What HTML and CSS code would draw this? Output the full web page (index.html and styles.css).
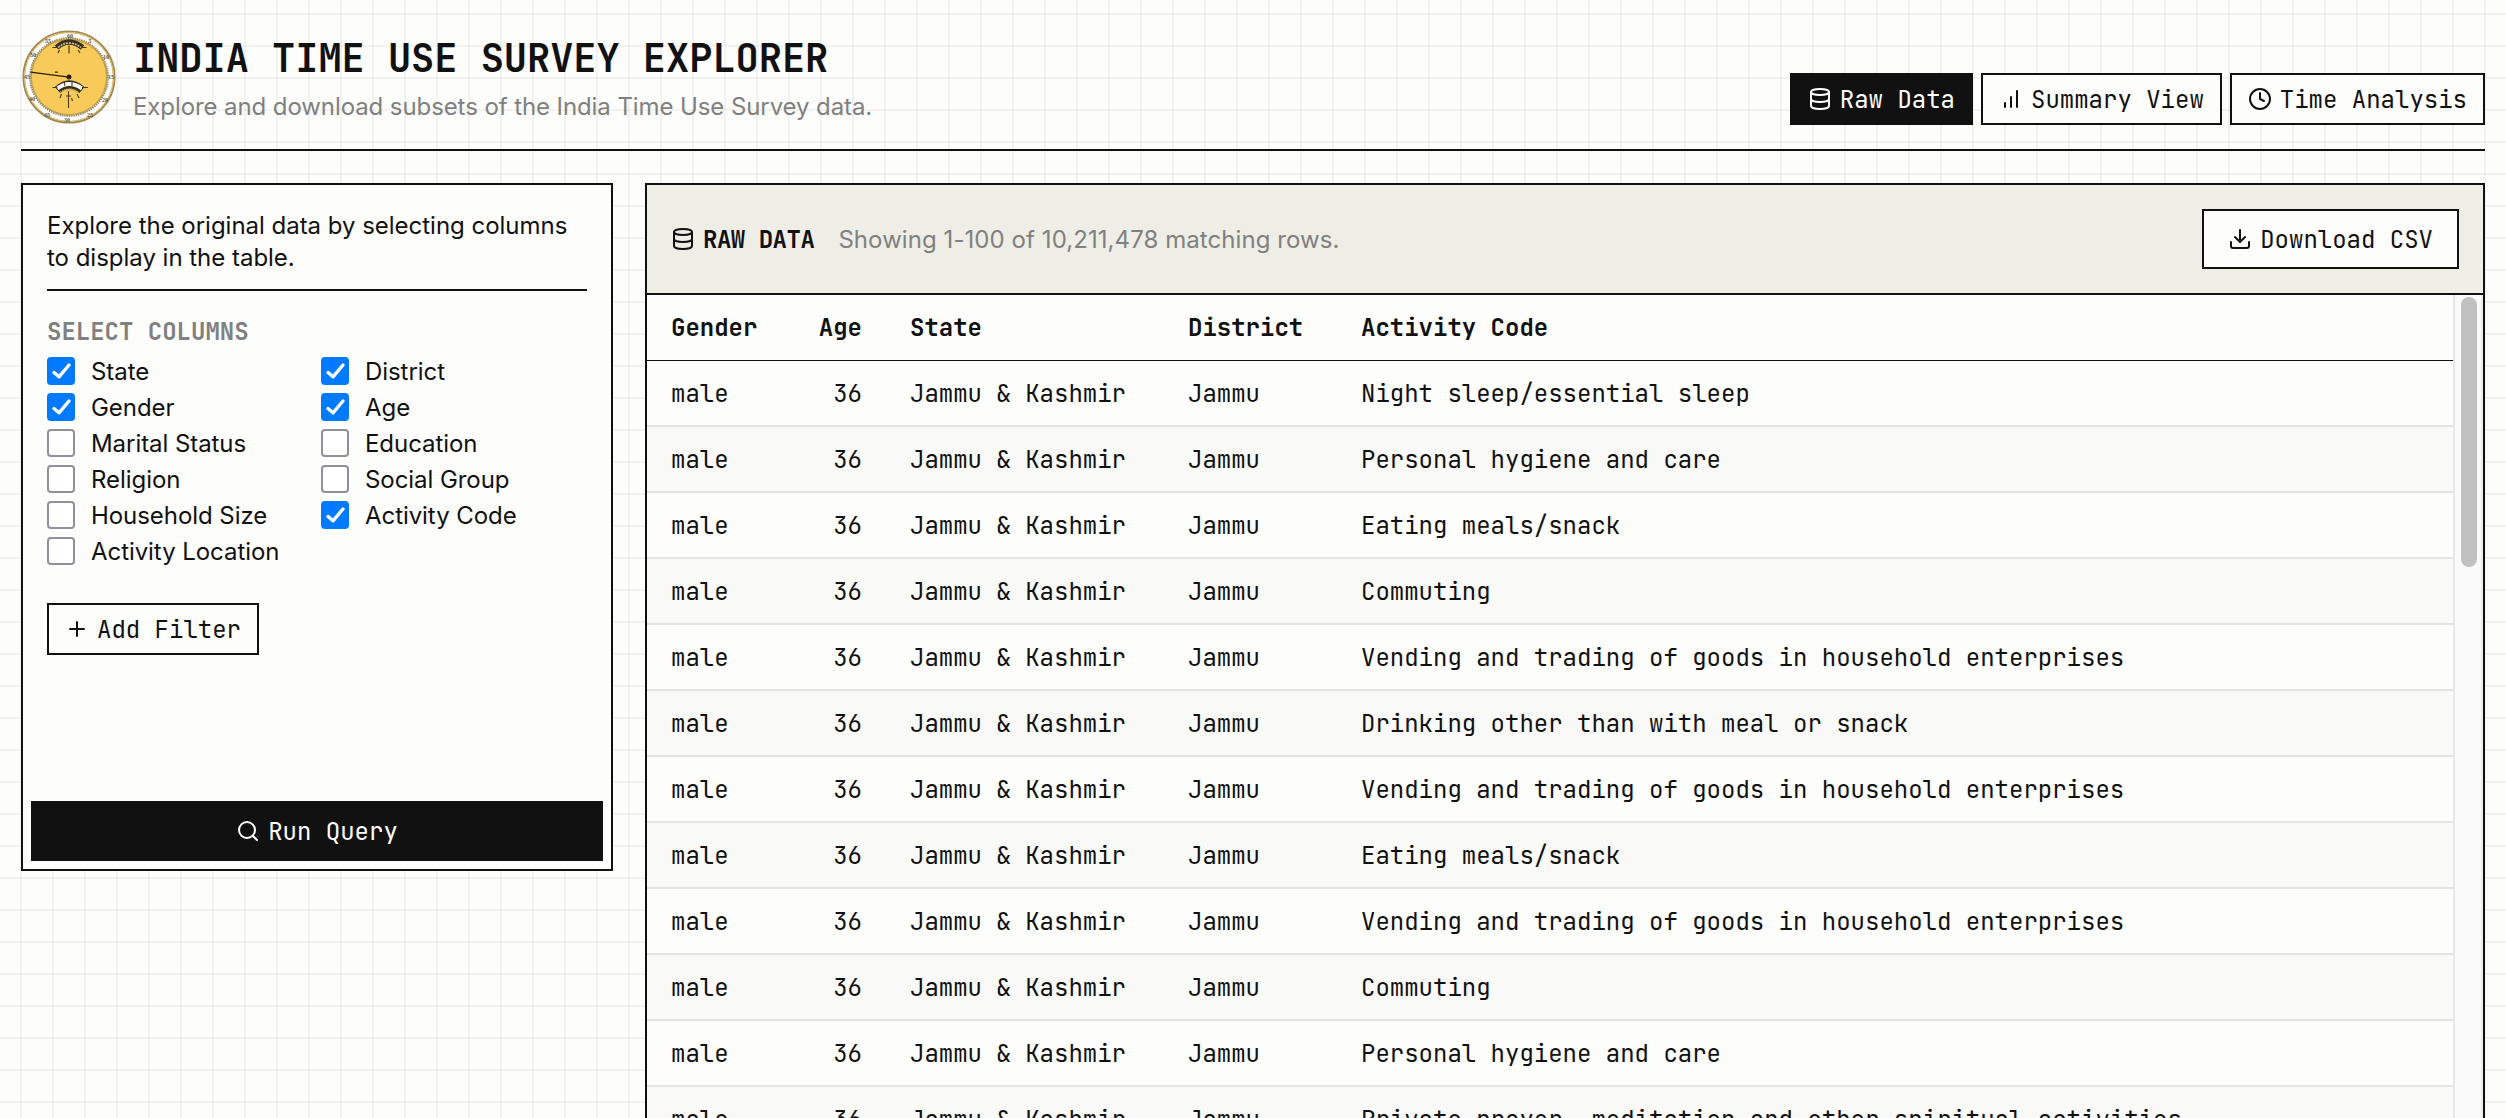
FILE: index.html
```html
<!DOCTYPE html>
<html lang="en">
<head>
<meta charset="utf-8">
<title>India Time Use Survey Explorer</title>
<link rel="stylesheet" href="styles.css">
</head>
<body>
<svg class="defs" width="0" height="0">
  <symbol id="database" viewBox="0 0 24 24"><ellipse cx="12" cy="5" rx="9" ry="3"/><path d="M3 5v14a9 3 0 0 0 18 0V5"/><path d="M3 12a9 3 0 0 0 18 0"/></symbol>
  <symbol id="bars" viewBox="0 0 24 24"><path d="M6 20v-4M12 20V10M18 20V4"/></symbol>
  <symbol id="clock" viewBox="0 0 24 24"><circle cx="12" cy="12" r="10"/><path d="M12 6v6l4 2"/></symbol>
  <symbol id="download" viewBox="0 0 24 24"><path d="M21 15v4a2 2 0 0 1-2 2H5a2 2 0 0 1-2-2v-4M7 10l5 5 5-5M12 15V3"/></symbol>
  <symbol id="plus" viewBox="0 0 24 24"><path d="M5 12h14M12 5v14"/></symbol>
  <symbol id="search" viewBox="0 0 24 24"><circle cx="11" cy="11" r="8"/><path d="m21 21-4.3-4.3"/></symbol>
  <symbol id="check" viewBox="0 0 28 28"><path d="M7 15.500 12 19.800 22 8"/></symbol>
</svg>
<header class="header">
  <svg class="logo" viewBox="0 0 96 96">
    <circle cx="48" cy="48" r="46" fill="#fff"/>
    <circle cx="48" cy="48" r="45.6" fill="none" stroke="#a08a52" stroke-width="1.800"/>
    <circle cx="48" cy="48" r="44.4" fill="none" stroke="#d9ae4c" stroke-width="1"/>
    <circle cx="48" cy="48" r="38.9" fill="#f8ca5a" stroke="#8d8874" stroke-width="2" stroke-dasharray="1.4 .9"/>
    <circle cx="48" cy="48" r="37.6" fill="#f8ca5a" stroke="#917a3f" stroke-width=".6"/>
    <g class="numerals">
      <text x="49" y="8.5">60</text><text x="69" y="14">5</text><text x="85" y="30">10</text><text x="90" y="50">15</text><text x="84" y="73">20</text><text x="69" y="88">25</text><text x="46" y="93">30</text><text x="26" y="88">35</text><text x="11" y="72">40</text><text x="6" y="50">45</text><text x="12" y="28">50</text><text x="27" y="14">55</text>
    </g>
    <path d="M35.500 18.500Q48 7.500 61.500 18.500" fill="none" stroke="#39301c" stroke-width="5.500"/>
    <path d="M37 18.500Q48 9.500 60 18.500" fill="none" stroke="#d6c79f" stroke-width="1.600" stroke-dasharray="2 1"/>
    <path d="M31.500 18.500h5M60.500 18.500h5M38.500 21l-1.500 3M48 16.500v8M57 21l2 3" fill="none" stroke="#4b3b1c" stroke-width="1.200"/>
    <path d="M36.500 61Q48 50 61 61" fill="none" stroke="#39301c" stroke-width="8"/>
    <path d="M36.500 59.500Q48 50.500 61 59.500" fill="none" stroke="#fff" stroke-width="4"/>
    <path d="M39.500 63.500Q48 57 58 63.500" fill="none" stroke="#b79f62" stroke-width="1.800" stroke-dasharray="1.200 1"/>
    <path d="M43 52.500l1 4.500M51 52v5M31.500 58.500h5M61 58.500h6M40.500 65l-1.500 4M56 65l2 4M47.500 62v17M45 67h5M50.500 69l1 3" fill="none" stroke="#4b3b1c" stroke-width="1.100"/>
    <path d="M9.500 43.200 48 48.200" stroke="#29200f" stroke-width="1.300"/>
    <path d="M34 43.200h3" stroke="#5e4a20" stroke-width="1.500"/>
    <circle cx="48" cy="48" r="2.500" fill="#29200f"/>
  </svg>
  <div class="heading">
    <h1>INDIA TIME USE SURVEY EXPLORER</h1>
    <p>Explore and download subsets of the India Time Use Survey data.</p>
  </div>
  <nav class="tabs">
    <button class="btn active"><svg class="icon"><use href="#database"/></svg>Raw Data</button>
    <button class="btn"><svg class="icon"><use href="#bars"/></svg>Summary View</button>
    <button class="btn"><svg class="icon"><use href="#clock"/></svg>Time Analysis</button>
  </nav>
</header>
<main class="layout">
  <aside class="sidebar">
    <div class="controls">
      <p class="intro">Explore the original data by selecting columns to display in the table.</p>
      <h2 class="label">SELECT COLUMNS</h2>
      <div class="columns">
        <div class="option"><span class="box on"><svg><use href="#check"/></svg></span>State</div>
        <div class="option"><span class="box on"><svg><use href="#check"/></svg></span>District</div>
        <div class="option"><span class="box on"><svg><use href="#check"/></svg></span>Gender</div>
        <div class="option"><span class="box on"><svg><use href="#check"/></svg></span>Age</div>
        <div class="option"><span class="box"></span>Marital Status</div>
        <div class="option"><span class="box"></span>Education</div>
        <div class="option"><span class="box"></span>Religion</div>
        <div class="option"><span class="box"></span>Social Group</div>
        <div class="option"><span class="box"></span>Household Size</div>
        <div class="option"><span class="box on"><svg><use href="#check"/></svg></span>Activity Code</div>
        <div class="option"><span class="box"></span>Activity Location</div>
      </div>
      <button class="btn"><svg class="icon"><use href="#plus"/></svg>Add Filter</button>
    </div>
    <button class="btn active run"><svg class="icon"><use href="#search"/></svg>Run Query</button>
  </aside>
  <section class="results">
    <div class="results-head">
      <h2 class="title"><svg class="icon"><use href="#database"/></svg>RAW DATA</h2>
      <p class="count">Showing 1-100 of 10,211,478 matching rows.</p>
      <button class="btn large"><svg class="icon"><use href="#download"/></svg>Download CSV</button>
    </div>
    <div class="table-area">
      <table>
        <colgroup><col class="c-gender"><col class="c-age"><col class="c-state"><col class="c-district"><col></colgroup>
        <thead><tr><th>Gender</th><th class="num">Age</th><th>State</th><th>District</th><th>Activity Code</th></tr></thead>
        <tbody>
          <tr><td>male</td><td class="num">36</td><td>Jammu &amp; Kashmir</td><td>Jammu</td><td>Night sleep/essential sleep</td></tr>
          <tr><td>male</td><td class="num">36</td><td>Jammu &amp; Kashmir</td><td>Jammu</td><td>Personal hygiene and care</td></tr>
          <tr><td>male</td><td class="num">36</td><td>Jammu &amp; Kashmir</td><td>Jammu</td><td>Eating meals/snack</td></tr>
          <tr><td>male</td><td class="num">36</td><td>Jammu &amp; Kashmir</td><td>Jammu</td><td>Commuting</td></tr>
          <tr><td>male</td><td class="num">36</td><td>Jammu &amp; Kashmir</td><td>Jammu</td><td>Vending and trading of goods in household enterprises</td></tr>
          <tr><td>male</td><td class="num">36</td><td>Jammu &amp; Kashmir</td><td>Jammu</td><td>Drinking other than with meal or snack</td></tr>
          <tr><td>male</td><td class="num">36</td><td>Jammu &amp; Kashmir</td><td>Jammu</td><td>Vending and trading of goods in household enterprises</td></tr>
          <tr><td>male</td><td class="num">36</td><td>Jammu &amp; Kashmir</td><td>Jammu</td><td>Eating meals/snack</td></tr>
          <tr><td>male</td><td class="num">36</td><td>Jammu &amp; Kashmir</td><td>Jammu</td><td>Vending and trading of goods in household enterprises</td></tr>
          <tr><td>male</td><td class="num">36</td><td>Jammu &amp; Kashmir</td><td>Jammu</td><td>Commuting</td></tr>
          <tr><td>male</td><td class="num">36</td><td>Jammu &amp; Kashmir</td><td>Jammu</td><td>Personal hygiene and care</td></tr>
          <tr><td>male</td><td class="num">36</td><td>Jammu &amp; Kashmir</td><td>Jammu</td><td>Private prayer, meditation and other spiritual activities</td></tr>
        </tbody>
      </table>
      <div class="track"><div class="thumb"></div></div>
    </div>
  </section>
</main>
</body>
</html>
```
FILE: styles.css
```css
* { box-sizing: border-box; margin: 0; }

body {
  height: 1118px;
  overflow: hidden;
  padding: 0 21px;
  display: flex;
  flex-direction: column;
  color: #111;
  background-color: #fdfdfb;
  background-image:
    linear-gradient(to right, rgba(0, 0, 0, .045) 2px, transparent 2px),
    linear-gradient(to bottom, rgba(0, 0, 0, .045) 2px, transparent 2px);
  background-size: 32px 32px;
  background-position: 20px 13px;
  font: 24px/32px Inter, sans-serif;
}

.defs { position: absolute; }

h1, h2, .btn, table {
  font-family: "JetBrains Mono", "DejaVu Sans Mono", monospace;
}

.header {
  display: flex;
  flex: none;
  height: 151px;
  border-bottom: 2px solid #111;
}
.logo { width: 96px; height: 96px; margin-top: 29px; flex: none; }
.numerals text { font: bold 6px "Liberation Serif", serif; text-anchor: middle; fill: #5b5546; }
.heading { margin: 35px 0 0 16px; }
h1 { font-size: 38.64px; line-height: 48px; white-space: nowrap; }
.heading p { margin-top: 8px; color: #808080; white-space: nowrap; letter-spacing: -.09px; }

.tabs { display: flex; gap: 8px; margin: 73px 0 0 auto; }

.btn {
  display: flex;
  align-items: center;
  justify-content: center;
  gap: 8px;
  height: 52px;
  padding: 1px 16px 0;
  border: 2px solid #111;
  background: #fdfdfb;
  color: #111;
  font-size: 24px;
  line-height: 32px;
  white-space: nowrap;
}
.btn.active { background: #111; color: #fdfdfb; }
.btn.large { height: 60px; padding: 1px 24px 0; margin-left: auto; }

.icon {
  width: 24px;
  height: 24px;
  margin-top: -1px;
  flex: none;
  fill: none;
  stroke: currentColor;
  stroke-width: 2;
  stroke-linecap: round;
  stroke-linejoin: round;
}

.layout {
  display: grid;
  grid-template-columns: 592px 1fr;
  gap: 32px;
  align-items: start;
  margin-top: 32px;
  flex: 1;
  min-height: 0;
  overflow: hidden;
}

.sidebar {
  display: flex;
  flex-direction: column;
  height: 688px;
  padding: 0 8px 8px;
  border: 2px solid #111;
  background: #fdfdfb;
}
.controls { flex: 1; padding: 24px 16px 0; }
.intro { padding: 1px 0 15px; border-bottom: 2px solid #111; letter-spacing: -.02px; }
.label { margin: 25px 0 7px; font-size: 24px; line-height: 32px; color: #808080; }
.columns {
  display: grid;
  grid-template-columns: 1fr 1fr;
  column-gap: 8px;
  row-gap: 4px;
  margin-bottom: 36px;
}
.option {
  display: flex;
  align-items: center;
  gap: 16px;
  height: 32px;
  padding-top: 1px;
  white-space: nowrap;
  letter-spacing: -.06px;
}
.box { width: 28px; height: 28px; margin-top: -1px; flex: none; border: 2px solid #8f8f9d; border-radius: 4px; background: #fff; }
.box.on { border: 0; background: #007aff; }
.box svg { display: block; width: 28px; height: 28px; fill: none; stroke: #fff; stroke-width: 3.4; stroke-linecap: round; stroke-linejoin: round; }
.run { height: 60px; }

.results { height: 1000px; border: 2px solid #111; background: #fdfdfb; }
.results-head {
  display: flex;
  align-items: center;
  height: 110px;
  padding: 0 24px;
  border-bottom: 2px solid #111;
  background: #eeeee6;
}
.title { display: flex; align-items: center; gap: 8px; padding-top: 1px; font-size: 24px; letter-spacing: -.48px; }
.count { margin-left: 24px; padding-top: 1px; color: #808080; letter-spacing: .07px; }

.table-area { display: flex; height: 886px; overflow: hidden; }
table {
  width: 1806px;
  align-self: flex-start;
  flex: none;
  table-layout: fixed;
  border-collapse: separate;
  border-spacing: 0;
}
.c-gender { width: 135px; }
.c-age { width: 104px; }
.c-state { width: 278px; }
.c-district { width: 173px; }
th, td { height: 66px; padding: 0 24px; text-align: left; white-space: nowrap; }
th { border-bottom: 1px solid #111; }
td { padding-top: 1px; border-bottom: 2px solid #e3e3e1; }
th.num, td.num { text-align: right; }
tbody tr:nth-child(even) { background: #f9f9f7; }

.track { width: 30px; border-left: 2px solid #e8e8e8; border-right: 2px solid #ededed; background: #fafafa; padding: 2px 4px 0 6px; }
.thumb { height: 270px; border-radius: 8px; background: #c1c1c1; }
```
